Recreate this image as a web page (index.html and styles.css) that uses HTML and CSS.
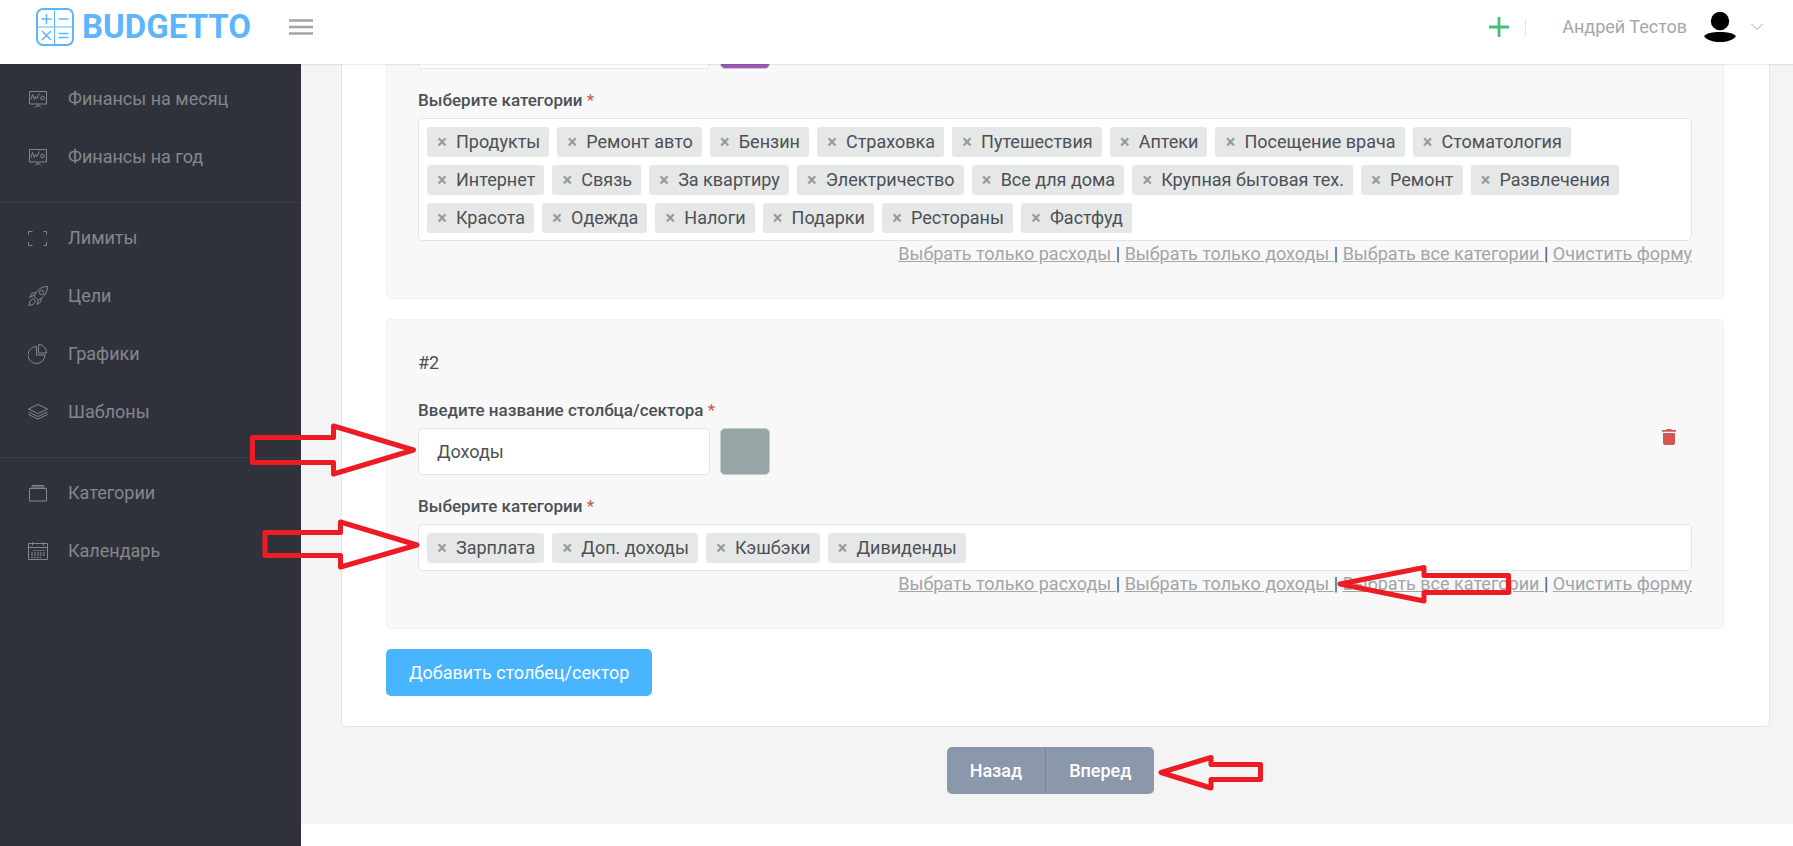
FILE: index.html
```html
<!DOCTYPE html>
<html lang="ru">
<head>
<meta charset="utf-8">
<title>Budgetto</title>
<link rel="stylesheet" href="styles.css">
</head>
<body>
<header class="topbar">
  <a class="logo" href="#">
    <svg class="logo-mark" width="38" height="38" viewBox="0 0 38 38" fill="none" stroke="currentColor" stroke-width="2">
      <rect x="1" y="1" width="36" height="36" rx="6"/>
      <path d="M18.500 1v36M1 19h36" stroke-width="1"/>
      <path d="M10.500 6v10M5.500 11h10M22.500 11h10M6 23l9 9M15 23l-9 9M22.500 25.500h10M22.500 29.500h10" stroke-width="1.500"/>
    </svg>
    <span class="logo-text">BUDGETTO</span>
  </a>
  <button class="icon-btn burger" aria-label="Меню">
    <svg width="24" height="16" viewBox="0 0 24 16" stroke="currentColor" stroke-width="2.400"><path d="M0 1.500h24M0 8h24M0 14.500h24"/></svg>
  </button>
  <div class="topbar-right">
    <button class="icon-btn add" aria-label="Добавить">
      <svg width="20" height="20" viewBox="0 0 20 20" stroke="currentColor" stroke-width="2.800"><path d="M0 10h20M10 0v20"/></svg>
    </button>
    <span class="divider"></span>
    <button class="icon-btn user">
      <span>Андрей Тестов</span>
      <svg class="avatar" width="32" height="30" viewBox="0 0 32 30"><circle cx="16" cy="9" r="9.200"/><path d="M0 24C4 18.500 28 18.500 32 24C27 32 5 32 0 24z"/></svg>
      <svg width="12" height="8" viewBox="0 0 12 8" fill="none" stroke="currentColor"><path d="M.5 1L6 6.500L11.500 1"/></svg>
    </button>
  </div>
</header>
<div class="layout">
  <nav class="sidebar">
    <ul class="menu">
      <li><a href="#"><svg viewBox="0 0 20 20"><path d="M1.500 2.500h17v12.500h-17zM10 15v2M7 18.500l1.500-1.500h3l1.500 1.500M3 10.500l1.500-5l2 5l1-3l1.500 2l2.500-5"/><circle cx="14.500" cy="9" r="1.800"/></svg>Финансы на месяц</a></li>
      <li><a href="#"><svg viewBox="0 0 20 20"><path d="M1.500 2.500h17v12.500h-17zM10 15v2M7 18.500l1.500-1.500h3l1.500 1.500M3 10.500l1.500-5l2 5l1-3l1.500 2l2.500-5"/><circle cx="14.500" cy="9" r="1.800"/></svg>Финансы на год</a></li>
    </ul>
    <ul class="menu">
      <li><a href="#"><svg viewBox="0 0 20 20"><path d="M.5 6.500v-3h4M15.500 3.500h3v3M18.500 14v3.500h-3M4.500 17.500h-4v-3.500"/></svg>Лимиты</a></li>
      <li><a href="#"><svg viewBox="0 0 20 20"><path d="M19.500.5C13 .5 9 4 6 10l4 4.500C16 11 19.500 7 19.500.5zM6.500 9L1.500 11.500L4.500 7H8M10.500 14L9 18.500L13 15.500V12M1 19.500l1-4.500l3-2.500l2.500 3l-2.500 3z"/><circle cx="13.500" cy="6.500" r="2.200"/></svg>Цели</a></li>
      <li><a href="#"><svg viewBox="0 0 20 20"><path d="M8.500 2.500a8.500 8.500 0 1 0 8.500 8.500H8.500zM10.500.5a8 8 0 0 1 8 8.500h-8z"/></svg>Графики</a></li>
      <li><a href="#"><svg viewBox="0 0 20 20"><path d="M10 2.500l9.500 4.500L10 11.500L.5 7zM.5 10l9.500 4.500l9.500-4.500M.5 12.500L10 17l9.500-4.500"/></svg>Шаблоны</a></li>
    </ul>
    <ul class="menu">
      <li><a href="#"><svg viewBox="0 0 20 20"><path d="M1.500 5.500h17v12.500h-17zM4 2.500h12M3 4h14"/></svg>Категории</a></li>
      <li><a href="#"><svg viewBox="0 0 20 20"><path d="M.5 2.500h19v16H.5zM.5 6.500h19M4.500 1v3.500M15.500 1v3.500"/><path d="M5.500 9.500h12M3 12h14M3 14h14M3 16.500h10" stroke-width="1.200" stroke-dasharray="2 1"/></svg>Календарь</a></li>
    </ul>
  </nav>
  <main class="main">
    <div class="content">
      <form class="card" id="report">
        <section class="panel">
          <div class="name-row">
            <div class="name-group">
              <input class="text-input" type="text" aria-label="Название">
              <button type="button" class="swatch purple" aria-label="Цвет"></button>
            </div>
          </div>
          <label class="label" for="cat1">Выберите категории <span class="req">*</span></label>
          <div class="tags" id="cat1">
            <span class="tag"><button type="button">×</button>Продукты</span>
            <span class="tag"><button type="button">×</button>Ремонт авто</span>
            <span class="tag"><button type="button">×</button>Бензин</span>
            <span class="tag"><button type="button">×</button>Страховка</span>
            <span class="tag"><button type="button">×</button>Путешествия</span>
            <span class="tag"><button type="button">×</button>Аптеки</span>
            <span class="tag"><button type="button">×</button>Посещение врача</span>
            <span class="tag"><button type="button">×</button>Стоматология</span>
            <span class="tag"><button type="button">×</button>Интернет</span>
            <span class="tag"><button type="button">×</button>Связь</span>
            <span class="tag"><button type="button">×</button>За квартиру</span>
            <span class="tag"><button type="button">×</button>Электричество</span>
            <span class="tag"><button type="button">×</button>Все для дома</span>
            <span class="tag"><button type="button">×</button>Крупная бытовая тех.</span>
            <span class="tag"><button type="button">×</button>Ремонт</span>
            <span class="tag"><button type="button">×</button>Развлечения</span>
            <span class="tag"><button type="button">×</button>Красота</span>
            <span class="tag"><button type="button">×</button>Одежда</span>
            <span class="tag"><button type="button">×</button>Налоги</span>
            <span class="tag"><button type="button">×</button>Подарки</span>
            <span class="tag"><button type="button">×</button>Рестораны</span>
            <span class="tag"><button type="button">×</button>Фастфуд</span>
          </div>
          <div class="links"><a href="#">Выбрать только расходы&nbsp;</a>| <a href="#">Выбрать только доходы&nbsp;</a>| <a href="#">Выбрать все категории&nbsp;</a>| <a href="#">Очистить форму</a></div>
        </section>
        <section class="panel">
          <div class="panel-title">#2</div>
          <div class="name-row">
            <div>
              <label class="label" for="name2">Введите название столбца/сектора <span class="req">*</span></label>
              <div class="name-group">
                <input class="text-input" id="name2" type="text" value="Доходы">
                <button type="button" class="swatch grey" aria-label="Цвет"></button>
              </div>
            </div>
            <button type="button" class="icon-btn trash" aria-label="Удалить">
              <svg width="14" height="16" viewBox="0 0 14 16" fill="currentColor"><path d="M0 1h4l1-1h4l1 1h4v1.800H0zM1 4h12v10a2 2 0 0 1-2 2H3a2 2 0 0 1-2-2z"/></svg>
            </button>
          </div>
          <label class="label" for="cat2">Выберите категории <span class="req">*</span></label>
          <div class="tags" id="cat2">
            <span class="tag"><button type="button">×</button>Зарплата</span>
            <span class="tag"><button type="button">×</button>Доп. доходы</span>
            <span class="tag"><button type="button">×</button>Кэшбэки</span>
            <span class="tag"><button type="button">×</button>Дивиденды</span>
          </div>
          <div class="links"><a href="#">Выбрать только расходы&nbsp;</a>| <a href="#">Выбрать только доходы&nbsp;</a>| <a href="#">Выбрать все категории&nbsp;</a>| <a href="#">Очистить форму</a></div>
        </section>
        <button type="button" class="btn btn-primary">Добавить столбец/сектор</button>
      </form>
      <div class="pager">
        <button class="btn btn-nav">Назад</button><button class="btn btn-nav">Вперед</button>
      </div>
    </div>
  </main>
</div>
<svg class="arrows" aria-hidden="true">
  <path d="M252.500 437.500H333.500V426L413.500 450L333.500 474V462.500H252.500z"/>
  <path d="M265 532.500H340.500V522L417 545L340.500 567V555.500H265z"/>
  <path d="M1508.500 575.500H1424V567.500L1340 584L1424 601V592.500H1508.500z"/>
  <path d="M1260.500 764.500H1211V757.500L1161 772.500L1211 788V779.500H1260.500z"/>
</svg>
</body>
</html>
```
FILE: styles.css
```css
* { box-sizing: border-box; }
body {
  margin: 0;
  height: 100vh;
  display: flex;
  flex-direction: column;
  position: relative;
  overflow: hidden;
  background: #fff;
  color: #4c5056;
  font: 18px/24px Roboto, "Noto Sans", sans-serif;
}
button, input { font: inherit; color: inherit; }
button { cursor: pointer; }
.icon-btn { border: 0; padding: 0; background: none; display: flex; align-items: center; }

.topbar {
  height: 64px;
  flex: none;
  display: flex;
  align-items: center;
  padding: 0 30px 10px 36px;
  background: #fff;
  box-shadow: 0 1px 1px rgba(0, 0, 0, .07);
  z-index: 1;
}
.logo { display: flex; align-items: center; gap: 8px; color: #5db5ff; text-decoration: none; }
.logo-text { font: 700 33px/38px Roboto, sans-serif; }
.burger { margin-left: 38px; color: #a2a4a4; }
.topbar-right { margin-left: auto; display: flex; align-items: center; color: #a5a7a7; }
.add { color: #46be78; }
.divider { width: 1px; height: 17px; margin: 0 36px 0 16px; background: #e6e6e6; }
.user { color: #a5a7a7; }
.avatar { margin: 0 15px 0 17px; fill: #000; }

.layout { flex: 1; min-height: 0; display: flex; }
.sidebar { width: 301px; flex: none; background: #30323b; }
.menu { list-style: none; margin: 0; padding: 6px 0 16px; border-bottom: 1px solid #3b3e47; }
.menu:last-child { border: 0; }
.menu a {
  display: flex;
  align-items: center;
  gap: 20px;
  height: 58px;
  padding-left: 28px;
  color: #83878d;
  text-decoration: none;
}
.menu svg { width: 20px; height: 20px; fill: none; stroke: currentColor; stroke-width: 1; }

.main {
  flex: 1;
  min-width: 0;
  overflow: hidden;
  display: flex;
  flex-direction: column;
  justify-content: flex-end;
  padding-bottom: 22px;
}
.content { background: #f4f4f4; padding: 0 23px 30px 30px; }
.card {
  margin-left: 10px;
  padding: 30px 45px 30px 44px;
  background: #fff;
  border: 1px solid #e4e4e4;
  border-radius: 5px;
}
.panel {
  margin-bottom: 20px;
  padding: 31px 31px 32px;
  background: #f8f8f8;
  border: 1px solid #efefef;
  border-radius: 5px;
}
.panel-title { margin-bottom: 23px; }
.label { display: block; margin-bottom: 6px; font-size: 17px; font-weight: 500; }
.req { color: #d2524c; font-weight: 400; }
.name-row { display: flex; justify-content: space-between; align-items: center; margin-bottom: 19px; }
.name-group { display: flex; gap: 10px; }
.text-input {
  width: 292px;
  height: 47px;
  padding: 0 18px;
  background: #fff;
  border: 1px solid #e4e4e4;
  border-radius: 5px;
}
.swatch { width: 50px; height: 47px; border: 1px solid #c6cccb; border-radius: 5px; }
.purple { background: #9b59b6; }
.grey { background: #96a5a5; }
.trash { margin-right: 16px; color: #d4564f; }
.tags {
  display: flex;
  flex-wrap: wrap;
  gap: 8px;
  padding: 8px 8px 7px;
  background: #fff;
  border: 1px solid #e4e4e4;
  border-radius: 5px;
}
.tag {
  display: flex;
  align-items: center;
  height: 30px;
  padding: 0 9px 0 10px;
  background: #e6e8e8;
  border-radius: 3px;
}
.tag button {
  width: 10px;
  margin-right: 9px;
  padding: 0;
  border: 0;
  background: none;
  color: #999b9b;
  font-weight: 700;
}
.links { margin-top: 1px; text-align: right; }
.links a { color: #a3a5a6; text-decoration: underline; }
.btn { height: 47px; padding: 0 23px; border: 0; color: #fff; }
.btn-primary { display: block; background: #49b4ff; border-radius: 5px; }
.pager { display: flex; justify-content: center; margin-top: 20px; }
.btn-nav { background: #8b97aa; font-weight: 500; }
.btn-nav:first-child { border-right: 1px solid #76839a; border-radius: 5px 0 0 5px; }
.btn-nav:last-child { border-radius: 0 5px 5px 0; }

.arrows {
  position: absolute;
  inset: 0;
  width: 100%;
  height: 100%;
  z-index: 2;
  pointer-events: none;
  fill: none;
  stroke: #ed1c24;
  stroke-width: 5;
  stroke-linejoin: round;
}
```
